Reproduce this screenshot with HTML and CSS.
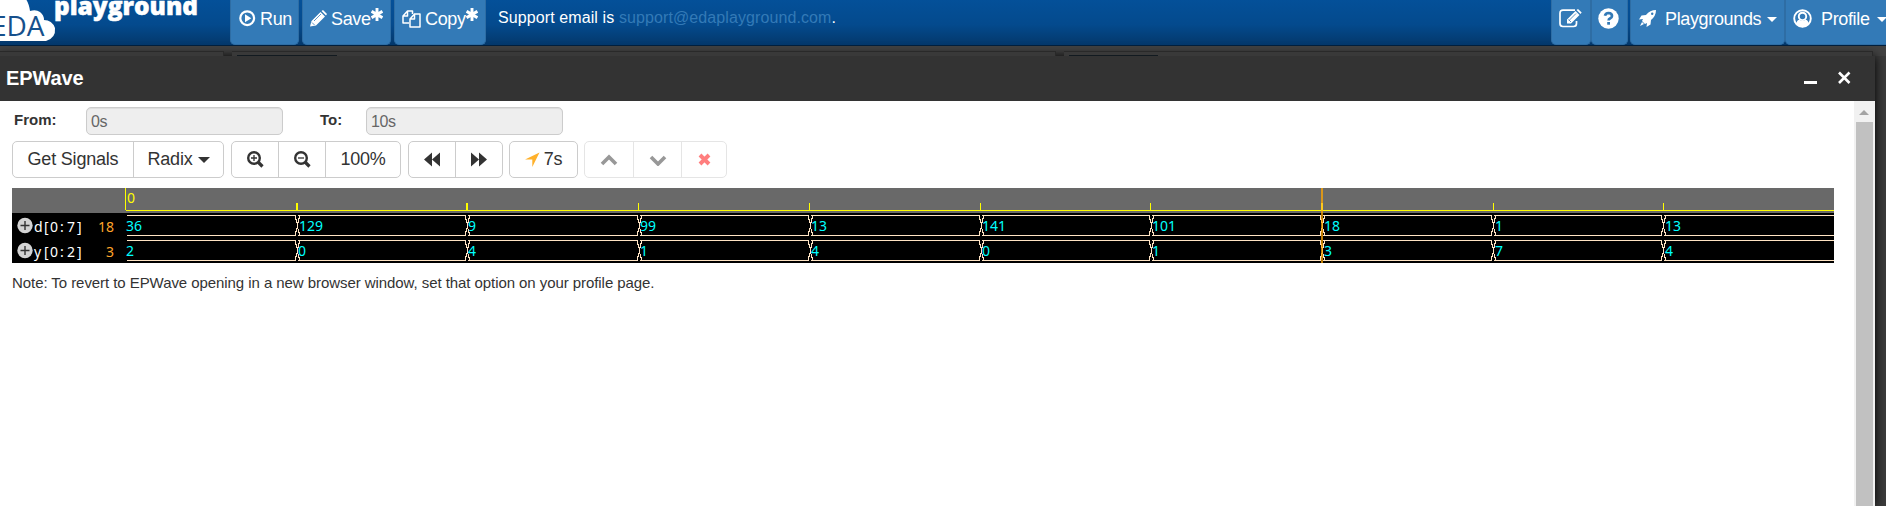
FILE: index.html
```html
<!DOCTYPE html>
<html lang="en">
<head>
<meta charset="utf-8">
<title>EDA Playground</title>
<link rel="stylesheet" href="styles.css">
</head>
<body>
<nav class="navbar">
  <svg class="logo" width="230" height="45" viewBox="0 0 230 45">
    <path class="cloud" d="M0 0H26.500Q29 4 30 11Q36 9 40 12Q44 15 44 20Q52 20 55 28Q56 38 46 41H0Z"/>
    <text class="eda" x="-9" y="36" textLength="53.500">EDA</text>
    <text class="brand" x="54" y="15" textLength="144" lengthAdjust="spacingAndGlyphs">playground</text>
  </svg>
  <div class="nav-left">
    <a class="nav-btn run"><svg width="17" height="17" viewBox="0 0 17 17"><circle cx="8.200" cy="8.200" r="6.900" fill="none" stroke="#fff" stroke-width="2.200"/><path d="M6 4.300L12.300 8.200L6 12.200Z" fill="#fff"/></svg><span>Run</span></a>
    <a class="nav-btn save"><svg width="17" height="17" viewBox="0 0 17 17"><path d="M0 16.500L1.500 11L10.500 2L15 6.500L6 15.500ZM11.500 1L13 0L17 4L16 5.500Z" fill="#fff"/><path d="M4 11L11 4M2 12.500L4.500 15" stroke="#337ab7" stroke-width=".8"/></svg><span>Save</span><svg class="star" width="12" height="13" viewBox="0 0 12 13"><path d="M6 0V13M.6 3.300L11.400 9.700M11.400 3.300L.6 9.700" stroke="#fff" stroke-width="2.900"/></svg></a>
    <a class="nav-btn copy"><svg width="19" height="18" viewBox="0 0 19 18"><g fill="none" stroke="#fff" stroke-width="1.500" stroke-linejoin="round"><path d="M7 13H1V6L5.500 1H10.500V4M5.500 1V6H1"/><path d="M12.500 4H18V17H8V9L12.500 4V9H8"/></g></svg><span>Copy</span><svg class="star" width="12" height="13" viewBox="0 0 12 13"><path d="M6 0V13M.6 3.300L11.400 9.700M11.400 3.300L.6 9.700" stroke="#fff" stroke-width="2.900"/></svg></a>
  </div>
  <p class="support">Support email is <a>support@edaplayground.com</a>.</p>
  <div class="nav-right">
    <a class="nav-btn edit"><svg width="23" height="19" viewBox="0 0 23 19"><path d="M16 1.200H4Q1 1.200 1 4.200V14.500Q1 17.500 4 17.500H14.500Q17.500 17.500 17.500 14.500V12" fill="none" stroke="#fff" stroke-width="1.700"/><path d="M8 14.500V10.500L16.500 2L20.500 6L12 14.500ZM17.500 1L19 0L22.700 3.500L21.500 5Z" fill="#fff"/><path d="M10 11.500L17 4.500M9.500 10.500L12 13" stroke="#337ab7" stroke-width=".8"/></svg></a>
    <a class="nav-btn help"><svg width="21" height="21" viewBox="0 0 21 21"><circle cx="10.500" cy="10.500" r="10.200" fill="#fff"/><path d="M7 7.800Q7.500 5 10.500 5Q14 5.200 14 8Q14 9.500 12 10.500Q10.600 11.200 10.600 12.500" fill="none" stroke="#337ab7" stroke-width="2.700"/><path d="M9.200 14H12V16.700H9.200Z" fill="#337ab7"/></svg></a>
    <a class="nav-btn play"><svg width="17" height="17" viewBox="0 0 17 17"><path d="M17 0Q11 0 7 5L2.500 5.500L0 9.500L4 9L3 11L6 14L8 13L7.500 17L11.500 14.500L12 10Q17 6 17 0Z" fill="#fff"/><circle cx="13.200" cy="3.800" r="1.200" fill="#337ab7"/><path d="M3 12L5 14L1 16Z" fill="#fff"/></svg><span>Playgrounds</span><i class="caret"></i></a>
    <a class="nav-btn profile"><svg width="19" height="19" viewBox="0 0 19 19"><circle cx="9.500" cy="9.500" r="8.300" fill="none" stroke="#fff" stroke-width="1.900"/><circle cx="9.500" cy="7.400" r="3.700" fill="none" stroke="#fff" stroke-width="1.900"/><path d="M3 15Q4.200 10.500 6.500 10.700Q9.500 13.400 12.500 10.700Q14.800 10.500 16 15Q9.500 21.500 3 15Z" fill="#fff"/></svg><span>Profile</span><i class="caret"></i></a>
  </div>
</nav>
<div class="backdrop"><div class="pane pane-left"></div><div class="pane pane-mid"><i></i></div><div class="pane pane-right"><i></i></div></div>
<section class="window">
  <header class="titlebar">
    <h1>EPWave</h1>
    <svg width="50" height="18" viewBox="0 0 50 18"><path d="M1 12.500H14" stroke="#fff" stroke-width="3"/><path d="M36 2.500L46.500 13M46.500 2.500L36 13" stroke="#fff" stroke-width="2.600"/></svg>
  </header>
  <div class="body">
    <main class="content">
      <div class="range">
        <label class="from">From:</label><div class="field">0s</div>
        <label class="to">To:</label><div class="field">10s</div>
      </div>
      <div class="toolbar">
        <div class="group g1"><span class="btn signals">Get Signals</span><span class="btn radix">Radix <i class="caret"></i></span></div>
        <div class="group g2">
          <span class="btn zoom"><svg width="17" height="17" viewBox="0 0 17 17"><path d="M11 11L15.500 15.500" stroke="#333" stroke-width="3.200"/><circle cx="7" cy="7" r="5.800" fill="none" stroke="#333" stroke-width="2.400"/><path d="M4 7H10M7 4V10" stroke="#333" stroke-width="1.300"/></svg></span>
          <span class="btn zoom"><svg width="17" height="17" viewBox="0 0 17 17"><path d="M11 11L15.500 15.500" stroke="#333" stroke-width="3.200"/><circle cx="7" cy="7" r="5.800" fill="none" stroke="#333" stroke-width="2.400"/><path d="M4 7H10" stroke="#333" stroke-width="1.300"/></svg></span>
          <span class="btn percent">100%</span>
        </div>
        <div class="group g3">
          <span class="btn"><svg width="16" height="15" viewBox="0 0 16 15"><path d="M0 7.500L8 .5V14.500ZM8 7.500L16 .5V14.500Z" fill="#333"/></svg></span>
          <span class="btn"><svg width="16" height="15" viewBox="0 0 16 15"><path d="M16 7.500L8 .5V14.500ZM8 7.500L0 .5V14.500Z" fill="#333"/></svg></span>
        </div>
        <div class="group g4"><span class="btn"><svg width="15" height="15" viewBox="0 0 15 15"><path d="M14.500 .5L0 7.500H7.300V15Z" fill="#ffb12b"/></svg><span class="time">7s</span></span></div>
        <div class="group g5">
          <span class="btn up"><svg width="18" height="12" viewBox="0 0 18 12"><path d="M2 10L9 3L16 10" fill="none" stroke="#333" stroke-width="3.600"/></svg></span>
          <span class="btn down"><svg width="18" height="12" viewBox="0 0 18 12"><path d="M2 3L9 10L16 3" fill="none" stroke="#333" stroke-width="3.600"/></svg></span>
          <span class="btn del"><svg width="13" height="13" viewBox="0 0 13 13"><path d="M2 2L11 11M11 2L2 11" stroke="red" stroke-width="3.900"/></svg></span>
        </div>
      </div>
      <svg class="wave" width="1822" height="75" viewBox="12 188 1822 75">
        <defs>
          <g id="cross" fill="none" stroke="#ffe4c4" shape-rendering="crispEdges">
            <path d="M-1.500 2V7M-.5 6V10M.5 9V16M-.5 15V19M-1.500 18V23M2.500 2V6M1.500 5V10M1.500 16V20M2.500 19V23"/>
          </g>
          <g id="bus" shape-rendering="crispEdges">
            <path d="M127 2.500H1834M127 22.500H1834" stroke="#ffe4c4"/>
            <path d="M296 2.500h2M466 2.500h2M638 2.500h2M809 2.500h2M980 2.500h2M1150 2.500h2M1321 2.500h2M1492 2.500h2M1662 2.500h2M296 22.500h2M466 22.500h2M638 22.500h2M809 22.500h2M980 22.500h2M1150 22.500h2M1321 22.500h2M1492 22.500h2M1662 22.500h2" stroke="#000"/>
            <use href="#cross" x="297"/><use href="#cross" x="467"/><use href="#cross" x="639"/><use href="#cross" x="810"/><use href="#cross" x="981"/><use href="#cross" x="1151"/><use href="#cross" x="1322"/><use href="#cross" x="1493"/><use href="#cross" x="1663"/>
          </g>
          <g id="plus"><circle r="7.700" fill="#d3d3d3"/><path d="M-4.500 0H4.500M0 -4.500V4.500" stroke="#333" stroke-width="1.400"/></g>
        </defs>
        <rect x="12" y="188" width="1822" height="25" fill="#696969"/>
        <rect x="12" y="213" width="1822" height="50"/>
        <g stroke="#ff0" fill="none" shape-rendering="crispEdges">
          <path d="M125.500 188V210M126 210.500H1834"/>
          <path d="M297 203V210M467 203V210" stroke-width="2"/>
          <path d="M638.500 203V210M809.500 203V210M980.500 203V210M1150.500 203V210M1493.500 203V210M1663.500 203V210"/>
        </g>
        <use href="#bus" y="213"/><use href="#bus" y="238"/>
        <use href="#plus" x="25" y="225.500"/><use href="#plus" x="25" y="250.500"/>
        <text class="mark" x="127" y="203">0</text>
        <g class="name"><text x="34 44 50 60 67 77" y="232">d[0:7]</text><text x="34 44 50 60 67 77" y="257">y[0:2]</text></g>
        <g class="now"><text x="98" y="232">18</text><text x="106" y="257">3</text></g>
        <g class="val">
          <text x="126" y="231">36</text><text x="299" y="231">129</text><text x="468" y="231">9</text><text x="640" y="231">99</text><text x="811" y="231">13</text><text x="982" y="231">141</text><text x="1152" y="231">101</text><text x="1324" y="231">18</text><text x="1495" y="231">1</text><text x="1665" y="231">13</text>
          <text x="126" y="256">2</text><text x="298" y="256">0</text><text x="468" y="256">4</text><text x="640" y="256">1</text><text x="811" y="256">4</text><text x="982" y="256">0</text><text x="1152" y="256">1</text><text x="1324" y="256">3</text><text x="1495" y="256">7</text><text x="1665" y="256">4</text>
        </g>
        <path d="M1322 188V263" stroke="#ffa500" stroke-opacity=".75" stroke-width="2"/>
        <path d="M1322 203V211" stroke="#ffc81c" stroke-width="2"/>
      </svg>
      <p class="note">Note: To revert to EPWave opening in a new browser window, set that option on your profile page.</p>
    </main>
    <aside class="scrollbar"><i class="arrow"></i><i class="thumb"></i></aside>
  </div>
</section>
</body>
</html>
```
FILE: styles.css
```css
* { box-sizing: border-box; }
body { margin: 0; width: 1886px; height: 506px; overflow: hidden; background: #3b3b3b; color: #333; font-family: "Liberation Sans", Arial, sans-serif; }
p, h1 { margin: 0; }
svg { display: block; flex: none; }
.navbar { display: flex; height: 46px; overflow: hidden; background: linear-gradient(#045099, #044a8d 55%, #04386b); border-bottom: 1px solid #02203e; color: #fff; }
.cloud { fill: #fff; }
.eda { font: 28px "Open Sans", sans-serif; fill: #16508c; }
.brand { font: 800 25px "Open Sans", sans-serif; fill: #fff; stroke: #fff; stroke-width: .5px; }
.nav-left { display: flex; gap: 3px; }
.nav-btn { display: flex; flex: none; align-items: flex-start; height: 45px; padding-top: 10px; background: #337ab7; border: 1px solid #2e6da4; border-top: 0; border-radius: 0 0 5px 5px; font-size: 18px; line-height: 18px; letter-spacing: -.35px; white-space: nowrap; }
.run { width: 69px; padding-left: 8px; gap: 4px; }
.save { width: 89px; padding-left: 7px; gap: 4px; }
.copy { width: 92px; padding-left: 7px; gap: 4px; }
.star { margin: -2px 0 0 -4px; }
.support { flex: 1; padding: 9px 0 0 12px; font-size: 16px; line-height: 18px; letter-spacing: .1px; }
.support a { color: #337ab7; }
.nav-right { display: flex; flex: none; width: 335px; overflow: hidden; }
.edit { width: 40px; padding: 9px 0 0 7px; }
.help { width: 37px; padding: 8px 0 0 6px; }
.play { width: 155px; margin-left: 2px; padding-left: 8px; }
.play span { margin-left: 9px; }
.profile { width: 115px; padding: 9px 0 0 7px; }
.profile span { margin: 1px 0 0 9px; }
.profile .caret { margin-top: 8px; margin-left: 7px; }
.caret { display: inline-block; border: 5px solid transparent; border-top-color: currentColor; border-bottom: 0; margin: 7px 0 0 6px; }
.backdrop { display: flex; height: 10px; padding-top: 5px; gap: 8px; background: #424242; }
.pane { border-top: 1px solid #292929; border-right: 1px solid #292929; background: #393939; }
.pane i { display: block; width: 100px; height: 1px; margin: 3px 0 0 5px; background: #121a20; }
.pane-left { width: 224px; }
.pane-mid { width: 824px; }
.pane-right { width: 809px; }
.pane-right i { width: 89px; }
.window { width: 1875px; height: 450px; box-shadow: 0 0 10px #000; }
.titlebar { display: flex; justify-content: space-between; height: 45px; padding: 11px 22px 0 6px; background: #333; color: #fff; }
.titlebar h1 { font-size: 20px; line-height: 23px; letter-spacing: -.1px; }
.titlebar svg { margin: 3px 0 0; }
.body { display: flex; height: 405px; background: #fff; }
.content { flex: 1; padding: 6px 0 0 12px; }
.range { display: flex; height: 34px; }
.range label { font-size: 15px; font-weight: 700; line-height: 26px; }
.from { width: 74px; padding-left: 2px; }
.to { width: 83px; padding-left: 37px; }
.field { width: 197px; height: 28px; padding: 0 4px; border: 1px solid #ccc; border-radius: 5px; background: #eee; box-shadow: inset 0 1px 1px rgba(0,0,0,.075); color: #666; font-size: 16px; line-height: 27px; letter-spacing: -.4px; }
.toolbar { display: flex; height: 47px; }
.group { display: flex; height: 37px; border: 1px solid #ccc; border-radius: 5px; }
.btn { display: flex; flex: 1; align-items: center; justify-content: center; font-size: 18px; letter-spacing: -.2px; white-space: nowrap; }
.btn + .btn { border-left: 1px solid #ccc; }
.btn .caret { border-width: 6px 6px 0; margin: 0 0 0 5px; }
.g1 { width: 212px; margin-right: 7px; }
.signals { flex: 0 0 120px; }
.g2 { width: 170px; margin-right: 7px; }
.zoom { flex: 0 0 46px; }
.zoom + .zoom { flex-basis: 47px; }
.g3 { width: 95px; margin-right: 6px; }
.g4 { width: 69px; margin-right: 6px; }
.time { margin-left: 4px; }
.g5 { width: 143px; opacity: .5; }
.up, .down { flex: 0 0 48px; }
.wave text { font: 14px "Noto Sans", sans-serif; }
.wave .mark { fill: #ff0; }
.wave .name text { fill: #fff; }
.wave .now text { fill: #ffa52a; }
.wave .val text { fill: #0ff; }
.note { padding-top: 11px; font-size: 15px; line-height: 18px; letter-spacing: -.065px; }
.scrollbar { width: 21px; padding: 9px 2px 0; background: #f1f1f1; overflow: hidden; }
.arrow { display: block; width: 10px; margin: 0 0 7px 3px; border: 5px solid transparent; border-bottom-color: #a3a3a3; border-top: 0; }
.thumb { display: block; height: 400px; background: #c1c1c1; }
```
